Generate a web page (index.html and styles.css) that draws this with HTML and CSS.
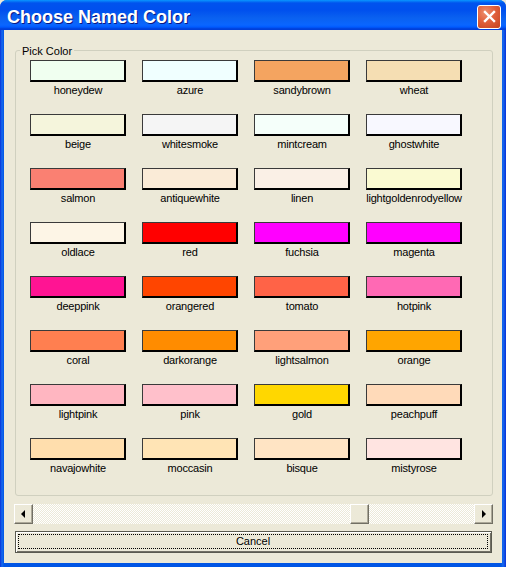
FILE: index.html
```html
<!DOCTYPE html>
<html>
<head>
<meta charset="utf-8">
<title>Choose Named Color</title>
<link rel="stylesheet" href="styles.css">
</head>
<body>
<div class="window">
  <div class="titlebar">
    <span class="title">Choose Named Color</span>
    <span class="close">
      <svg width="13" height="13" viewBox="0 0 13 13"><path d="M2 2 L11 11 M11 2 L2 11" stroke="#fff" stroke-width="2.4" stroke-linecap="square"/></svg>
    </span>
  </div>
  <div class="client">
    <div class="group">
      <span class="legend">Pick Color</span>
      <div class="grid">
        <div class="cell"><div class="sw" style="background:honeydew"></div><div class="lbl">honeydew</div></div>
        <div class="cell"><div class="sw" style="background:azure"></div><div class="lbl">azure</div></div>
        <div class="cell"><div class="sw" style="background:sandybrown"></div><div class="lbl">sandybrown</div></div>
        <div class="cell"><div class="sw" style="background:wheat"></div><div class="lbl">wheat</div></div>
        <div class="cell"><div class="sw" style="background:beige"></div><div class="lbl">beige</div></div>
        <div class="cell"><div class="sw" style="background:whitesmoke"></div><div class="lbl">whitesmoke</div></div>
        <div class="cell"><div class="sw" style="background:mintcream"></div><div class="lbl">mintcream</div></div>
        <div class="cell"><div class="sw" style="background:ghostwhite"></div><div class="lbl">ghostwhite</div></div>
        <div class="cell"><div class="sw" style="background:salmon"></div><div class="lbl">salmon</div></div>
        <div class="cell"><div class="sw" style="background:antiquewhite"></div><div class="lbl">antiquewhite</div></div>
        <div class="cell"><div class="sw" style="background:linen"></div><div class="lbl">linen</div></div>
        <div class="cell"><div class="sw" style="background:lightgoldenrodyellow"></div><div class="lbl">lightgoldenrodyellow</div></div>
        <div class="cell"><div class="sw" style="background:oldlace"></div><div class="lbl">oldlace</div></div>
        <div class="cell"><div class="sw" style="background:red"></div><div class="lbl">red</div></div>
        <div class="cell"><div class="sw" style="background:fuchsia"></div><div class="lbl">fuchsia</div></div>
        <div class="cell"><div class="sw" style="background:magenta"></div><div class="lbl">magenta</div></div>
        <div class="cell"><div class="sw" style="background:deeppink"></div><div class="lbl">deeppink</div></div>
        <div class="cell"><div class="sw" style="background:orangered"></div><div class="lbl">orangered</div></div>
        <div class="cell"><div class="sw" style="background:tomato"></div><div class="lbl">tomato</div></div>
        <div class="cell"><div class="sw" style="background:hotpink"></div><div class="lbl">hotpink</div></div>
        <div class="cell"><div class="sw" style="background:coral"></div><div class="lbl">coral</div></div>
        <div class="cell"><div class="sw" style="background:darkorange"></div><div class="lbl">darkorange</div></div>
        <div class="cell"><div class="sw" style="background:lightsalmon"></div><div class="lbl">lightsalmon</div></div>
        <div class="cell"><div class="sw" style="background:orange"></div><div class="lbl">orange</div></div>
        <div class="cell"><div class="sw" style="background:lightpink"></div><div class="lbl">lightpink</div></div>
        <div class="cell"><div class="sw" style="background:pink"></div><div class="lbl">pink</div></div>
        <div class="cell"><div class="sw" style="background:gold"></div><div class="lbl">gold</div></div>
        <div class="cell"><div class="sw" style="background:peachpuff"></div><div class="lbl">peachpuff</div></div>
        <div class="cell"><div class="sw" style="background:navajowhite"></div><div class="lbl">navajowhite</div></div>
        <div class="cell"><div class="sw" style="background:moccasin"></div><div class="lbl">moccasin</div></div>
        <div class="cell"><div class="sw" style="background:bisque"></div><div class="lbl">bisque</div></div>
        <div class="cell"><div class="sw" style="background:mistyrose"></div><div class="lbl">mistyrose</div></div>
      </div>
    </div>
    <div class="scrollbar">
      <div class="sbtn"><svg width="5" height="8" viewBox="0 0 5 8"><polygon points="4,0 4,8 0,4" fill="#000"/></svg></div>
      <div class="track">
        <div class="thumb"></div>
      </div>
      <div class="sbtn"><svg width="5" height="8" viewBox="0 0 5 8"><polygon points="1,0 1,8 5,4" fill="#000"/></svg></div>
    </div>
    <div class="button"><span class="focus">Cancel</span></div>
  </div>
</div>
</body>
</html>
```

FILE: styles.css
```css
html, body {
  margin: 0;
  padding: 0;
  width: 506px;
  height: 567px;
  overflow: hidden;
  background: #ECE9D8;
}

.window {
  width: 506px;
  height: 567px;
  box-sizing: border-box;
  display: flex;
  flex-direction: column;
  border-radius: 7px 7px 0 0;
  padding: 0 4px 4px 4px;
  background: linear-gradient(90deg, #0831D9 0, #166AEE 2px, #0055E5 4px, #0055E5 501px, #166AEE 503px, #0831D9 506px);
}

.titlebar {
  height: 30px;
  margin: 0 -4px;
  padding: 0 0 0 7px;
  display: flex;
  align-items: center;
  justify-content: space-between;
  border-radius: 7px 7px 0 0;
  background: linear-gradient(180deg, #0997FF 0, #0053EE 3px, #0050EE 10px, #0A61F0 18px, #0A66FF 25px, #005BFF 27px, #003DD7 29px, #0041DC 30px);
}

.title {
  font-family: "Liberation Sans", Arial, sans-serif;
  font-weight: bold;
  font-size: 18px;
  color: #fff;
  text-shadow: 1px 1px #0A1883;
  margin-top: 4px;
}

.close {
  width: 22px;
  height: 22px;
  margin-right: 5px;
  margin-top: 3px;
  border: 1px solid #fff;
  border-radius: 3px;
  display: flex;
  align-items: center;
  justify-content: center;
  background: radial-gradient(circle at 35% 30%, #EE8F6E 0, #E0603C 45%, #C4421F 100%);
}

.client {
  flex: 1;
  background: #ECE9D8;
  display: flex;
  flex-direction: column;
  padding: 20px 10px 0 10px;
  font-family: "Liberation Sans", Arial, sans-serif;
  font-size: 11px;
  color: #000;
}

.group {
  position: relative;
  margin-left: 1px;
  width: 478px;
  height: 446px;
  box-sizing: border-box;
  border: 1px solid #D0D0BF;
  border-radius: 3px;
  padding: 9px 0 0 14px;
}

.legend {
  position: absolute;
  left: 4px;
  top: -6px;
  padding: 0 2px;
  background: #ECE9D8;
  line-height: 13px;
  color: #000;
}

.grid {
  display: grid;
  grid-template-columns: repeat(4, 96px);
  column-gap: 16px;
  row-gap: 17px;
}

.cell {
  display: flex;
  flex-direction: column;
  align-items: center;
}

.sw {
  width: 96px;
  height: 22px;
  box-sizing: border-box;
  border-top: 1px solid #3A3A3A;
  border-left: 1px solid #3A3A3A;
  border-right: 2px solid #000;
  border-bottom: 2px solid #000;
}

.lbl {
  padding-top: 2px;
  line-height: 13px;
  height: 13px;
  white-space: nowrap;
  letter-spacing: -0.2px;
}

.scrollbar {
  margin-top: 8px;
  width: 479px;
  height: 20px;
  display: flex;
}

.sbtn {
  width: 19px;
  height: 20px;
  box-sizing: border-box;
  background: #ECE9D8;
  border: 1px solid;
  border-color: #fff #716F64 #716F64 #fff;
  box-shadow: inset -1px -1px #ACA899;
  display: flex;
  align-items: center;
  justify-content: center;
}

.track {
  flex: 1;
  display: flex;
  padding-left: 317px;
  background: repeating-conic-gradient(#fff 0 25%, #ECE9D8 0 50%) 0 0 / 2px 2px;
}

.thumb {
  width: 19px;
  height: 20px;
  box-sizing: border-box;
  background: #ECE9D8;
  border: 1px solid;
  border-color: #fff #716F64 #716F64 #fff;
  box-shadow: inset -1px -1px #ACA899;
}

.button {
  margin-top: 7px;
  margin-left: 1px;
  width: 477px;
  height: 22px;
  box-sizing: border-box;
  background: #ECE9D8;
  border: 1px solid #5A5A50;
  box-shadow: inset 1px 1px #fff, inset -1px -1px #716F64;
  padding: 2px 3px 3px 2px;
  display: flex;
}

.focus {
  flex: 1;
  border: 1px dotted #000;
  display: flex;
  align-items: center;
  justify-content: center;
  line-height: 13px;
}
```
